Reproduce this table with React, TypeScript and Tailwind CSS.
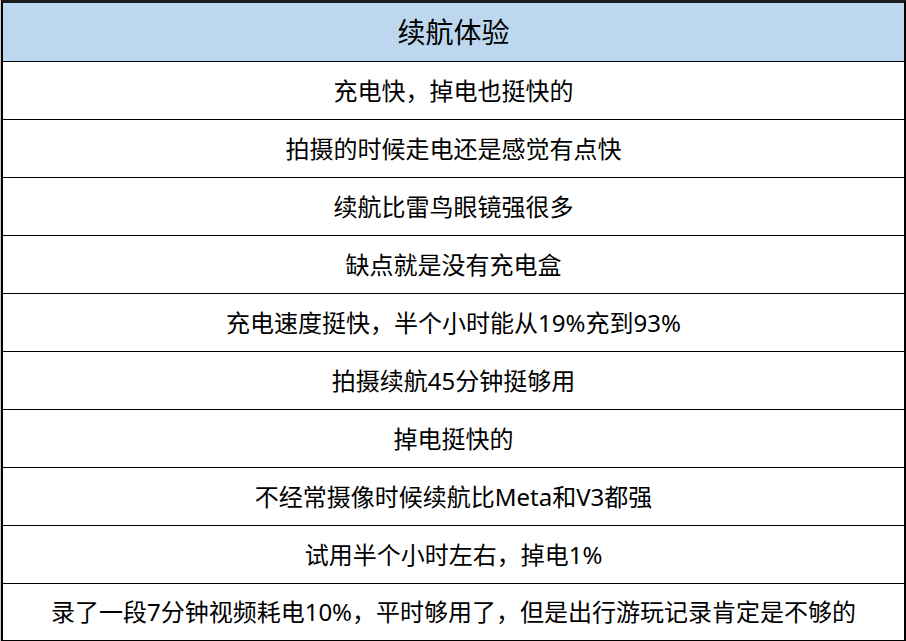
const rows = [
  "充电快，掉电也挺快的",
  "拍摄的时候走电还是感觉有点快",
  "续航比雷鸟眼镜强很多",
  "缺点就是没有充电盒",
  "充电速度挺快，半个小时能从19%充到93%",
  "拍摄续航45分钟挺够用",
  "掉电挺快的",
  "不经常摄像时候续航比Meta和V3都强",
  "试用半个小时左右，掉电1%",
  "录了一段7分钟视频耗电10%，平时够用了，但是出行游玩记录肯定是不够的",
];

export default function App() {
  return (
    <div className="w-[906px] h-[641px] overflow-hidden bg-white border-l border-[#c8c8c8] font-['Noto_Sans','Noto_Sans_CJK_SC',sans-serif] text-black">
      <div className="flex flex-col border-t-[3px] border-l-2 border-r-2 border-t-[#1c1c1c] border-l-black border-r-black">
        {/* Header */}
        <div className="h-[59px] flex items-center justify-center bg-[#bdd7ee] border-b border-black text-[28px] leading-none">
          续航体验
        </div>
        {rows.map((text, i) => (
          <div
            key={i}
            className={`${i === rows.length - 1 ? "h-[57px]" : "h-[58px]"} flex items-center justify-center border-b border-black text-[24px] leading-none`}
          >
            {text}
          </div>
        ))}
      </div>
    </div>
  );
}
